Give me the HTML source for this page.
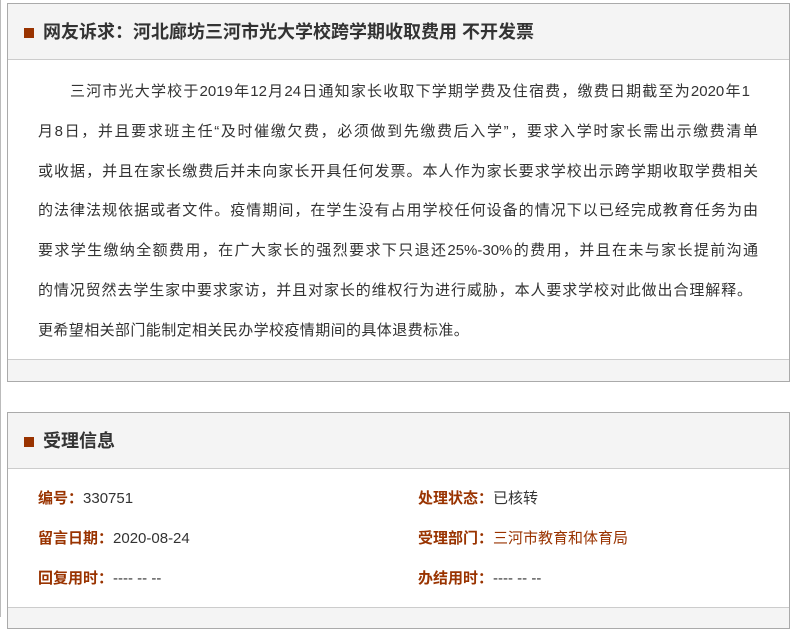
<!DOCTYPE html>
<html><head><meta charset="utf-8"><style>
body{margin:0;width:793px;height:617px;overflow:hidden;background:#fff;font-family:"Liberation Sans","Noto Sans CJK SC",sans-serif;position:relative}
.edge{position:absolute;left:0;top:0;width:1px;height:617px;background:#bbb}
.box{position:absolute;left:7px;width:781px;border:1px solid #aaa;background:#fff}
.hd{height:55px;background:#f4f4f4;border-bottom:1px solid #ccc;position:relative}
.hd i{position:absolute;left:16px;top:24px;width:10px;height:10px;background:#993300}
.hd b{position:absolute;left:35px;top:15px;font-size:18px;color:#333;line-height:26px}
.txt{position:absolute;left:30px;top:68px;font-size:15px;color:#333;line-height:40px;white-space:nowrap}
.txt div{width:720px;text-align:justify;text-align-last:justify;height:39.8px;overflow:hidden}
.txt div.f{width:680px;margin-left:32px}
.txt div.l{text-align-last:left}
.ft{height:21px;background:#f4f4f4;border-top:1px solid #ccc;position:absolute;left:0;right:0;bottom:0}
.row{position:absolute;font-size:15px;color:#333;line-height:20px}
.row span{color:#993300;font-weight:bold}
.row span.n{font-weight:normal}
</style></head><body>
<div class="edge"></div>
<div class="box" style="top:3px;height:377px">
<div class="hd"><i></i><b>网友诉求：河北廊坊三河市光大学校跨学期收取费用 不开发票</b></div>
<div class="txt">
<div class="f">三河市光大学校于2019年12月24日通知家长收取下学期学费及住宿费，缴费日期截至为2020年1</div>
<div>月8日，并且要求班主任“及时催缴欠费，必须做到先缴费后入学”，要求入学时家长需出示缴费清单</div>
<div>或收据，并且在家长缴费后并未向家长开具任何发票。本人作为家长要求学校出示跨学期收取学费相关</div>
<div>的法律法规依据或者文件。疫情期间，在学生没有占用学校任何设备的情况下以已经完成教育任务为由</div>
<div>要求学生缴纳全额费用，在广大家长的强烈要求下只退还25%-30%的费用，并且在未与家长提前沟通</div>
<div style="width:714px">的情况贸然去学生家中要求家访，并且对家长的维权行为进行威胁，本人要求学校对此做出合理解释。</div>
<div class="l" style="letter-spacing:0.4px">更希望相关部门能制定相关民办学校疫情期间的具体退费标准。</div>
</div>
<div class="ft"></div>
</div>
<div class="box" style="top:412px;height:215px">
<div class="hd"><i></i><b>受理信息</b></div>
<div class="row" style="left:30px;top:76px"><span>编号：</span>330751</div>
<div class="row" style="left:410px;top:76px"><span>处理状态：</span>已核转</div>
<div class="row" style="left:30px;top:116px"><span>留言日期：</span>2020-08-24</div>
<div class="row" style="left:410px;top:116px"><span>受理部门：</span><span class="n">三河市教育和体育局</span></div>
<div class="row" style="left:30px;top:156px"><span>回复用时：</span>---- -- --</div>
<div class="row" style="left:410px;top:156px"><span>办结用时：</span>---- -- --</div>
<div class="ft" style="bottom:0;height:20px"></div>
</div>
</body></html>
